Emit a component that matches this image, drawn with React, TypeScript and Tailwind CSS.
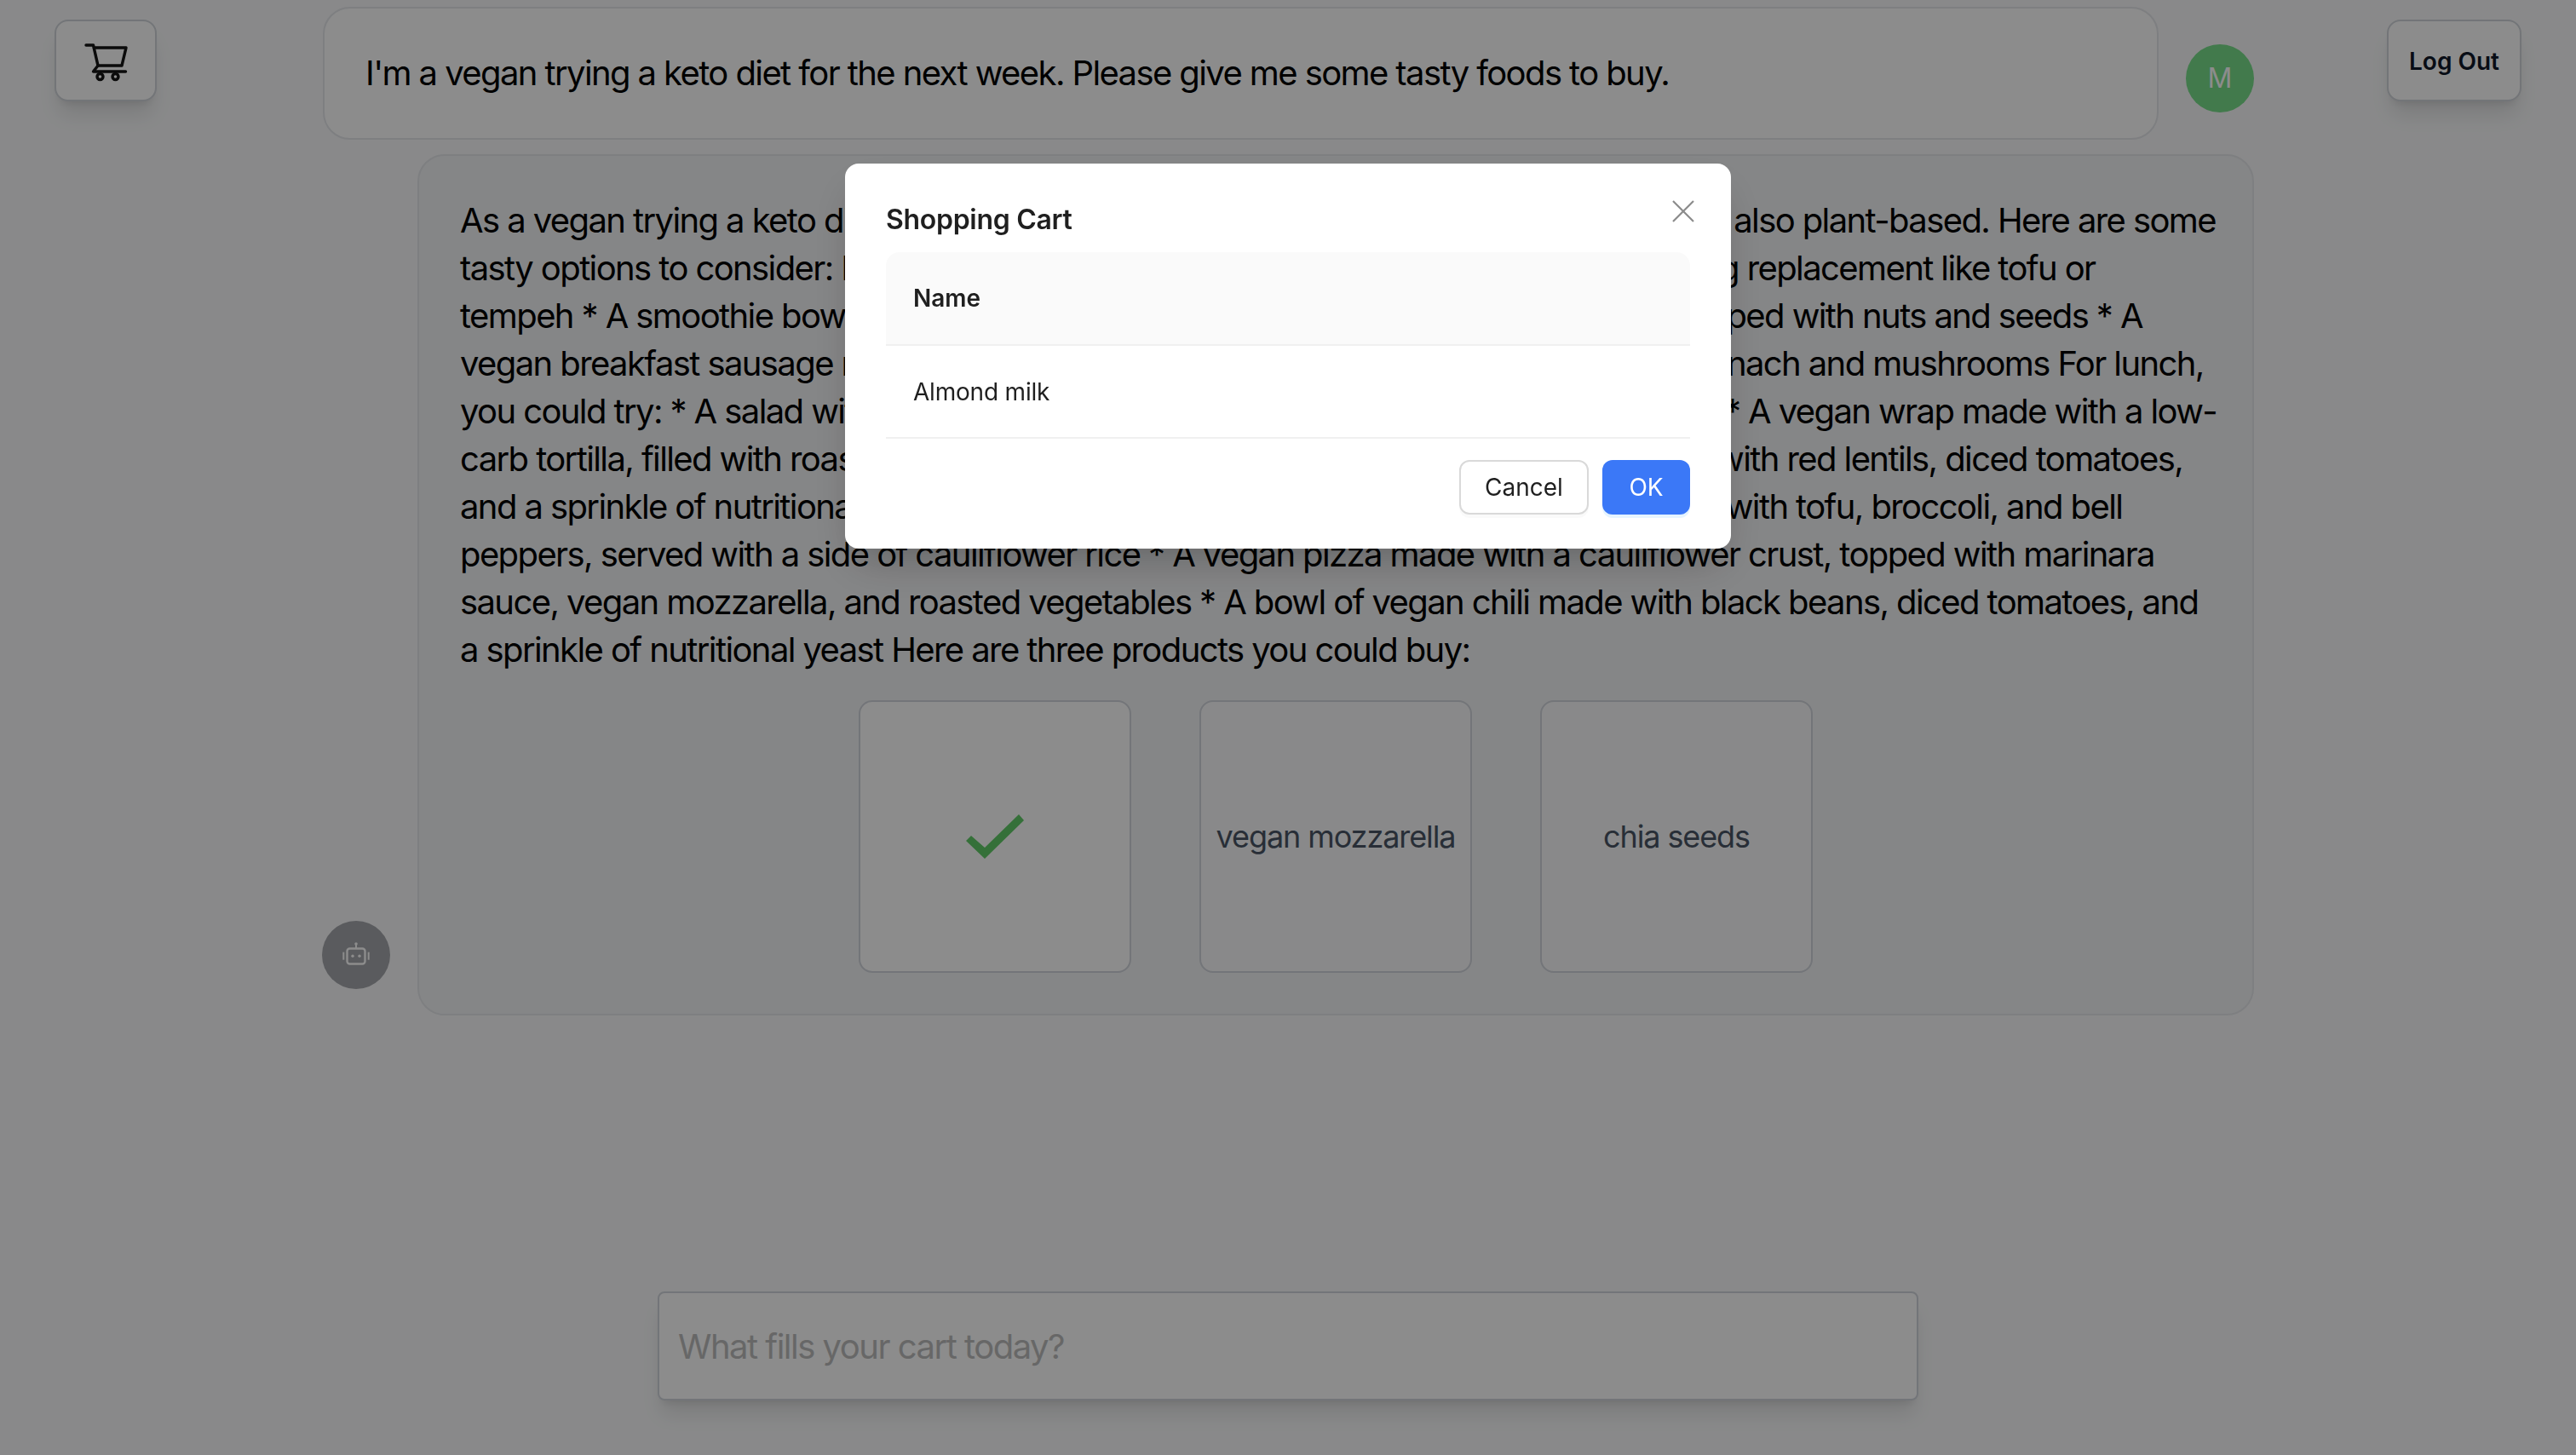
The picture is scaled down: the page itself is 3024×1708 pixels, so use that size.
const FONT = "font-['Inter','Noto_Sans',sans-serif]";

const answerLines = [
  "As a vegan trying a keto diet, it's best to enjoy foods low in carbs and high in fat, while also plant-based. Here are some",
  "tasty options to consider: For breakfast, you may try: * A tofu scramble with vegan egg replacement like tofu or",
  "tempeh * A smoothie bowl made with coconut cream, avocado, and fresh berries, topped with nuts and seeds * A",
  "vegan breakfast sausage made with smoky tempeh, served with a side of sauteed spinach and mushrooms For lunch,",
  "you could try: * A salad with mixed baby greens, avocado, nuts, and olive oil dressing * A vegan wrap made with a low-",
  "carb tortilla, filled with roasted vegetables and creamy hummus, * A lentil soup made with red lentils, diced tomatoes,",
  "and a sprinkle of nutritional yeast For the dinner, you could try: * A spicy stir-fry made with tofu, broccoli, and bell",
  "peppers, served with a side of cauliflower rice * A vegan pizza made with a cauliflower crust, topped with marinara",
  "sauce, vegan mozzarella, and roasted vegetables * A bowl of vegan chili made with black beans, diced tomatoes, and",
  "a sprinkle of nutritional yeast Here are three products you could buy:",
];

function CartIcon() {
  return (
    <svg width="60" height="50" viewBox="44 31 60 50" fill="none" stroke="#141414" strokeWidth="3.4" strokeLinecap="round" strokeLinejoin="round">
      <path d="M51 38H59.5L65 62H93L98 41H60" />
      <path d="M65 62L59.5 69H97.5" />
      <circle cx="67.5" cy="75" r="3.5" />
      <circle cx="85.5" cy="75" r="3.5" />
    </svg>
  );
}

function RobotIcon() {
  return (
    <svg width="40" height="40" viewBox="38 40 40 40" fill="none">
      <rect x="47.5" y="52.5" width="21" height="18" rx="3" stroke="white" strokeWidth="2.4" />
      <path d="M58 47V52" stroke="white" strokeWidth="2" />
      <circle cx="58" cy="47" r="1.8" fill="white" />
      <circle cx="54" cy="61.3" r="1.7" fill="white" />
      <circle cx="62" cy="61.3" r="1.7" fill="white" />
      <rect x="42.3" y="56.7" width="2" height="9" fill="white" />
      <rect x="71.7" y="56.7" width="2" height="9" fill="white" />
    </svg>
  );
}

function Check() {
  return (
    <svg width="68" height="52" viewBox="0 0 68 52">
      <path d="M6 25L0 31L22 52L68 7L62 0L22 39Z" fill="#62cd68" />
    </svg>
  );
}

function ProductCard({ children, selected }: { children: React.ReactNode; selected?: boolean }) {
  return (
    <div className={`flex h-[320px] w-[320px] items-center justify-center rounded-[16px] border-2 border-gray-300 text-[36px] leading-[56px] tracking-[-1.1px] text-gray-600 ${selected ? "bg-white" : "bg-gray-50"}`}>
      {children}
    </div>
  );
}

function TopButton({ children }: { children: React.ReactNode }) {
  return (
    <button className="flex h-[96px] w-full items-center justify-center rounded-[16px] border-2 border-[#d1d5db] bg-white shadow-[0_20px_25px_-5px_rgba(0,0,0,0.1),0_8px_10px_-6px_rgba(0,0,0,0.1)]">
      {children}
    </button>
  );
}

export default function App() {
  return (
    <div className={`${FONT} relative flex h-[1708px] w-[3024px] flex-col overflow-hidden bg-gray-50 text-black`}>
      <div className="flex flex-1 items-start px-[64px]">
        <div className="mt-[23px] w-[120px] shrink-0">
          <TopButton>
            <CartIcon />
          </TopButton>
        </div>

        <main className="ml-[194px] flex w-[2268px] shrink-0 flex-col gap-[17px] pt-[8px]">
          <div className="flex items-start gap-[32px] pl-[1px]">
            <div className="flex h-[156px] w-[2155px] items-center rounded-[32px] border-2 border-gray-200 bg-white px-[48px] text-[40px] leading-[56px] tracking-[-1.6px]">
              I'm a vegan trying a keto diet for the next week. Please give me some tasty foods to buy.
            </div>
            <div className="mt-[44px] flex h-[80px] w-[80px] items-center justify-center rounded-full bg-[#78de8a] text-[32px] text-white">
              M
            </div>
          </div>

          <div className="flex items-end gap-[32px]">
            <div className="mb-[31px] flex h-[80px] w-[80px] shrink-0 items-center justify-center rounded-full bg-[#a4a6ab]">
              <RobotIcon />
            </div>
            <div className="w-[2156px] rounded-[32px] border-2 border-gray-200 bg-gray-100 p-[48px]">
              <p className="text-[40px] leading-[56px] tracking-[-1.6px]">
                {answerLines.map((line) => (
                  <span key={line} className="block whitespace-nowrap">{line}</span>
                ))}
              </p>
              <div className="mt-[31px] flex justify-center gap-[80px]">
                <ProductCard selected><Check /></ProductCard>
                <ProductCard>vegan mozzarella</ProductCard>
                <ProductCard>chia seeds</ProductCard>
              </div>
            </div>
          </div>
        </main>

        <div className="ml-[156px] mt-[23px] w-[158px] shrink-0">
          <TopButton>
            <span className="pt-[2px] text-center text-[28px] font-semibold text-gray-900">Log Out</span>
          </TopButton>
        </div>
      </div>

      <div className="mx-auto mb-[64px] flex h-[128px] w-[1480px] items-center rounded-[8px] border-2 border-gray-300 bg-white px-[22px] pt-[2px] shadow-[0_20px_25px_-5px_rgba(0,0,0,0.1),0_8px_10px_-6px_rgba(0,0,0,0.1)]">
        <input
          readOnly
          placeholder="What fills your cart today?"
          className="w-full bg-transparent text-[40px] leading-[56px] tracking-[-1.5px] outline-none placeholder:text-[#bcbcbc]"
        />
      </div>

      <div className="fixed inset-0 flex items-start justify-center bg-black/45 pt-[192px]">
        <div className="relative flex w-[1040px] flex-col rounded-[16px] bg-white px-[48px] pb-[40px] pt-[42px] text-black/90 shadow-2xl">
          <h2 className="mb-[14px] text-[32px] font-semibold leading-[48px] tracking-[-0.3px] text-[#1f1f1f]">Shopping Cart</h2>
          <button className="absolute right-[43px] top-[43px] text-[#8c8c8c]" aria-label="Close">
            <svg width="26" height="26" viewBox="0 0 26 26" fill="none" stroke="currentColor" strokeWidth="2.2">
              <path d="M1 1L25 25M25 1L1 25" />
            </svg>
          </button>
          <div className="text-[28px] leading-[44px] text-[#1f1f1f]">
            <div className="flex h-[110px] items-center rounded-t-[16px] border-b-2 border-[#f0f0f0] bg-[#fafafa] px-[32px] font-semibold">
              Name
            </div>
            <div className="flex h-[109px] items-center border-b-2 border-[#f0f0f0] px-[32px] tracking-[-0.2px]">Almond milk</div>
          </div>
          <div className="mt-[25px] flex justify-end gap-[16px] text-[28px]">
            <button className="h-[64px] w-[152px] rounded-[12px] border-2 border-[#d9d9d9] bg-white text-[#1f1f1f] shadow-[0_4px_0_rgba(0,0,0,0.02)]">
              Cancel
            </button>
            <button className="h-[64px] w-[103px] rounded-[12px] bg-[#3b78f7] text-white shadow-[0_4px_0_rgba(5,145,255,0.1)]">
              OK
            </button>
          </div>
        </div>
      </div>
    </div>
  );
}
